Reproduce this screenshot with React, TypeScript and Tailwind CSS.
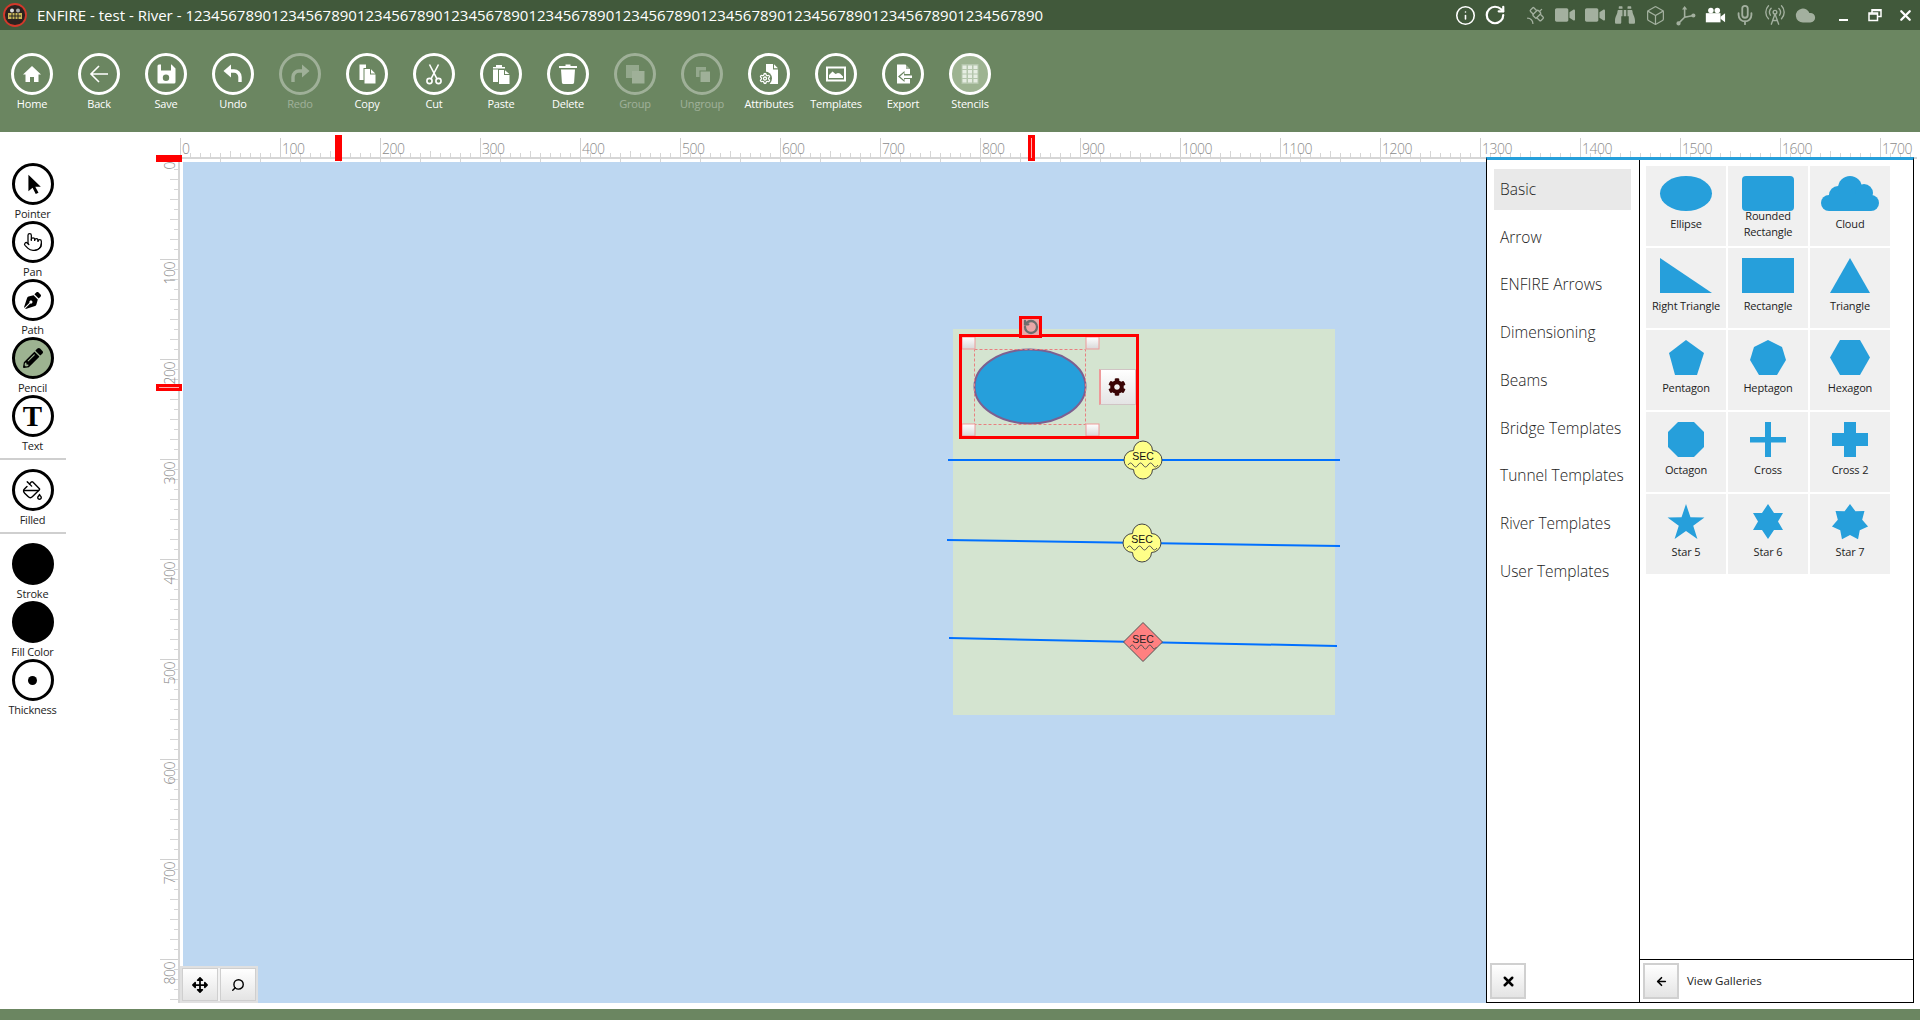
import { ReactNode } from "react";
import { Info, RotateCw, Satellite, Box, Mic, RadioTower, Cloud, Pointer, PaintBucket, Settings, Search, X, ArrowLeft } from "lucide-react";
import { FaVideo, FaBinoculars, FaPenNib, FaPencilAlt, FaCog, FaArrowsAlt } from "react-icons/fa";

const BLUE = "#269fdb";

const digits = "1234567890".repeat(10);

const range = (from: number, to: number, step: number) => {
  const out: number[] = [];
  for (let i = from; i <= to; i += step) out.push(i);
  return out;
};

const starPoints = (n: number, cx: number, cy: number, R: number, r: number) =>
  range(0, n * 2 - 1, 1)
    .map((i) => {
      const a = (Math.PI * i) / n - Math.PI / 2;
      const d = i % 2 === 0 ? R : r;
      return `${cx + d * Math.cos(a)},${cy + d * Math.sin(a)}`;
    })
    .join(" ");

const Ic = ({ children }: { children: ReactNode }) => (
  <svg viewBox="0 0 24 24" width="24" height="24" fill="currentColor">
    {children}
  </svg>
);

const toolbar: { label: string; off?: boolean; active?: boolean; icon: ReactNode }[] = [
  { label: "Home", icon: <Ic><path d="M12 4 L21 12.5 H18.5 V20 H14 V15 H10 V20 H5.5 V12.5 H3 Z" /></Ic> },
  { label: "Back", icon: <Ic><path d="M21 12 H4.5 M12 4 L4 12 L12 20" fill="none" stroke="currentColor" strokeWidth="1.6" /></Ic> },
  { label: "Save", icon: <Ic><path fillRule="evenodd" d="M5 2.5h12.5l4 4V20a1.5 1.5 0 01-1.5 1.5H5A1.5 1.5 0 013.5 20V4A1.5 1.5 0 015 2.5zM7 2.5v6h10v-6zM12 12.5a3.2 3.2 0 100 6.4 3.2 3.2 0 000-6.4z" /></Ic> },
  { label: "Undo", icon: <Ic><path d="M6 9 H13 a6 6 0 0 1 6 6 v5" fill="none" stroke="currentColor" strokeWidth="3.4" /><path d="M10 2.5 L2.5 9 L10 15.5 Z" /></Ic> },
  { label: "Redo", off: true, icon: <Ic><g transform="matrix(-1 0 0 1 24 0)"><path d="M6 9 H13 a6 6 0 0 1 6 6 v5" fill="none" stroke="currentColor" strokeWidth="3.4" /><path d="M10 2.5 L2.5 9 L10 15.5 Z" /></g></Ic> },
  { label: "Copy", icon: <Ic><path d="M4.5 2.5h6.5v3.5H8.5v12h-4z" /><path d="M9.5 7h5.5v5.5h5.5v9h-11zM16 7.2l4.3 4.3H16z" /></Ic> },
  { label: "Cut", icon: <Ic><g fill="none" stroke="currentColor" strokeWidth="1.6"><circle cx="7.5" cy="19" r="2.6" /><circle cx="16.5" cy="19" r="2.6" /><path d="M9 16.8 L16.5 2.5 M15 16.8 L7.5 2.5" /></g></Ic> },
  { label: "Paste", icon: <Ic><path d="M4 5h3V3h6v2h3v1.5H4zM4 7.5h5V20H4z" /><path d="M10 8h5v5h5.5v9H10zM16 8.2l4.3 3.8H16z" /></Ic> },
  { label: "Delete", icon: <Ic><path d="M9.5 2.5h5V4H21v2H3V4h6.5z" /><path d="M5 7.5h14l-.9 13a1.8 1.8 0 01-1.8 1.5H7.7a1.8 1.8 0 01-1.8-1.5z" /></Ic> },
  { label: "Group", off: true, icon: <Ic><path d="M3 3h13v13H3z" opacity=".8" /><path d="M9 9h12.5v12.5H9z" /></Ic> },
  { label: "Ungroup", off: true, icon: <Ic><path d="M6 5h10v3.5H9.5V15H6z" opacity=".8" /><path d="M10.5 9.5H20V20h-9.5z" /></Ic> },
  { label: "Attributes", icon: <Ic><path d="M9 2h7v5.5h5V22H9z" /><path d="M17 2.2l4 4h-4z" /><circle cx="8" cy="16.5" r="7" fill="#6b8661" /><Settings x={2} y={10.5} width={12} height={12} strokeWidth={2.6} fill="none" /></Ic> },
  { label: "Templates", icon: <Ic><path fillRule="evenodd" d="M2 4.5h20v15H2zM4 6.5v11h16v-11z" /><path d="M5 16v-3l3.5-3.5 3 2.5 2.5-1 2 .5 3 3v1.5z" /></Ic> },
  { label: "Export", icon: <Ic><path d="M6 2.5h8.5L19 7v14.5H6z" /><path d="M15 2.5l4.5 4.5H15z" fill="#6b8661" opacity=".6" /><path d="M7 14.5l6.5-5.5v3h10v5h-10v3z" fill="#6b8661" /><path d="M9 14.5l4-3.5v2.5h8V16h-8v2z" /></Ic> },
  { label: "Stencils", active: true, icon: <svg viewBox="0 0 24 24" width="24" height="24"><rect x="3.5" y="2" width="17" height="20" fill="#b5c6ad" /><g fill="#e6ede2">{[4.5, 10, 15.5].map((x) => [3.5, 8, 12.5, 17].map((y) => <rect key={`${x}-${y}`} x={x} y={y} width="4" height="3.5" />))}</g></svg> },
];

const tools: { label: string; active?: boolean; solid?: boolean; divider?: boolean; icon?: ReactNode }[] = [
  { label: "Pointer", icon: <svg viewBox="0 0 24 24" width="22" height="22"><path d="M7 2 L7 20 L11.5 16 L15 23 L18 21.5 L14.5 15 L20.5 15 Z" /></svg> },
  { label: "Pan", icon: <Pointer size={20} strokeWidth={1.5} /> },
  { label: "Path", icon: <FaPenNib size={17} /> },
  { label: "Pencil", active: true, icon: <FaPencilAlt size={20} /> },
  { label: "Text", divider: true, icon: <span className="font-['Liberation_Serif',serif] font-bold text-[29px] leading-none">T</span> },
  { label: "Filled", divider: true, icon: <PaintBucket size={21} strokeWidth={1.6} /> },
  { label: "Stroke", solid: true },
  { label: "Fill Color", solid: true },
  { label: "Thickness", icon: <span className="w-[9px] h-[9px] rounded-full bg-black" /> },
];

const menu = ["Basic", "Arrow", "ENFIRE Arrows", "Dimensioning", "Beams", "Bridge Templates", "Tunnel Templates", "River Templates", "User Templates"];

const shapes: { label: string; tall?: boolean; shape: ReactNode }[] = [
  { label: "Ellipse", shape: <ellipse cx="40" cy="27.5" rx="26" ry="17.5" /> },
  { label: "Rounded Rectangle", tall: true, shape: <rect x="14" y="10" width="52" height="35" rx="4" /> },
  { label: "Cloud", shape: <g><circle cx="19" cy="37" r="8" /><circle cx="28" cy="29" r="9" /><circle cx="40" cy="22" r="12" /><circle cx="54" cy="27" r="9" /><circle cx="61" cy="37" r="8" /><rect x="19" y="28" width="42" height="17" /></g> },
  { label: "Right Triangle", shape: <polygon points="14,10 66,45 14,45" /> },
  { label: "Rectangle", shape: <rect x="14" y="10" width="52" height="35" /> },
  { label: "Triangle", shape: <polygon points="40,10 60,45 20,45" /> },
  { label: "Pentagon", shape: <polygon points="40,10 58,23 51,45 29,45 23,23" /> },
  { label: "Heptagon", shape: <polygon points="40,10 54,17 58,30 49,45 31,45 22,30 26,17" /> },
  { label: "Hexagon", shape: <polygon points="30,10 50,10 60,27.5 50,45 30,45 20,27.5" /> },
  { label: "Octagon", shape: <polygon points="32,10 48,10 58,20 58,35 48,45 32,45 22,35 22,20" /> },
  { label: "Cross", shape: <path d="M37 10h6v15h15v5.5H43V45h-6V30.5H22V25h15z" /> },
  { label: "Cross 2", shape: <path d="M34 10h12v11h12v13H46v11H34V34H22V21h12z" /> },
  { label: "Star 5", shape: <polygon points={starPoints(5, 40, 29.4, 19.4, 7.6)} /> },
  { label: "Star 6", shape: <polygon points="40,10 46,19 55,19 50,27.5 55,36 46,36 40,45 34,36 25,36 30,27.5 25,19 34,19" /> },
  { label: "Star 7", shape: <polygon points={starPoints(7, 40, 28.5, 18.5, 12.5)} /> },
];

const SecCloud = ({ x, y }: { x: number; y: number }) => (
  <g transform={`translate(${x} ${y})`}>
    <path d="M9.5 9.5 A9.5 9.5 0 0 1 28.5 9.5 A9.5 9.5 0 0 1 28.5 28.5 A9.5 9.5 0 0 1 9.5 28.5 A9.5 9.5 0 0 1 9.5 9.5 Z" fill="#ffff88" stroke="#444" strokeWidth="1" />
    <text x="19" y="19" textAnchor="middle" fontSize="10.5" fill="#111" className="font-['Liberation_Sans',sans-serif]">SEC</text>
    <path d="M4 24 q2.5 -4 5 0 t5 0 t5 0 t5 0 t5 0 t5 0" fill="none" stroke="#555" strokeWidth="1" />
  </g>
);

const GrayButton = ({ children, className }: { children: ReactNode; className?: string }) => (
  <div className={`w-9 h-9 flex items-center justify-center border-2 border-[#d0d0d0] bg-linear-to-b from-white to-[#e4e4e4] text-black ${className ?? ""}`}>
    {children}
  </div>
);

const handles = [
  [962, 337],
  [1086, 337],
  [962, 424],
  [1086, 424],
];

export default function App() {
  return (
    <div className="w-[1920px] h-[1020px] overflow-hidden flex flex-col bg-white font-['Open_Sans',sans-serif]">
      {/* title bar */}
      <header className="h-[30px] shrink-0 flex items-center bg-[#41593b] text-white">
        <svg viewBox="0 0 24 24" width="24" height="24" className="ml-[3px] shrink-0">
          <circle cx="12" cy="12" r="11" fill="#2b2320" stroke="#d3392b" strokeWidth="1.8" />
          <rect x="5" y="10" width="14" height="6" fill="#c9b458" />
          <circle cx="9" cy="7.5" r="2" fill="#ddd" />
          <circle cx="15" cy="7.5" r="2" fill="#aaa" />
          <path d="M6 13h12M9 10v6M12 10v6M15 10v6" stroke="#222" strokeWidth="1" />
        </svg>
        <span className="ml-[10px] text-[15px] whitespace-nowrap">ENFIRE - test - River - {digits}</span>
        <div className="ml-auto flex items-center">
          <span className="w-[30px] flex justify-center"><Info size={21} strokeWidth={1.8} /></span>
          <span className="w-[30px] flex justify-center mr-[10px]"><RotateCw size={22} strokeWidth={2.4} /></span>
          <div className="flex items-center text-[#a3b09f]">
            <span className="w-[30px] flex justify-center"><Satellite size={21} strokeWidth={1.5} /></span>
            <span className="w-[30px] flex justify-center"><FaVideo size={20} /></span>
            <span className="w-[30px] flex justify-center"><FaVideo size={20} /></span>
            <span className="w-[30px] flex justify-center"><FaBinoculars size={20} /></span>
            <span className="w-[30px] flex justify-center"><Box size={21} strokeWidth={1.4} /></span>
            <span className="w-[30px] flex justify-center">
              <svg viewBox="0 0 24 24" width="21" height="21" fill="currentColor" stroke="currentColor" strokeWidth="1.8">
                <path d="M11 3v11L4 21M11 14l10-2" fill="none" />
                <path d="M11 1l-3 4h6z" stroke="none" />
                <circle cx="4" cy="21" r="1.5" />
                <circle cx="21" cy="12" r="1.5" />
              </svg>
            </span>
            <span className="w-[30px] flex justify-center text-white">
              <svg viewBox="0 0 24 24" width="22" height="22" fill="currentColor">
                <circle cx="7.5" cy="7" r="3" />
                <circle cx="14.5" cy="7" r="3" />
                <rect x="2" y="10" width="16" height="10" />
                <path d="M18 14l5-4v10l-5-4z" />
              </svg>
            </span>
            <span className="w-[30px] flex justify-center"><Mic size={22} strokeWidth={2} /></span>
            <span className="w-[30px] flex justify-center"><RadioTower size={22} strokeWidth={1.5} /></span>
            <span className="w-[30px] flex justify-center"><Cloud size={21} fill="currentColor" /></span>
          </div>
          <span className="w-[31px] ml-[8px] flex justify-center pt-[9px]"><span className="w-[9px] h-[2px] bg-white" /></span>
          <span className="w-[31px] flex justify-center">
            <svg viewBox="0 0 14 14" width="14" height="14" fill="none" stroke="currentColor" strokeWidth="1.5">
              <rect x="1" y="5" width="8.5" height="7.5" />
              <path d="M4 5V1.8h9v6.7H9.5" />
              <path d="M1 6h8.5M4 2.5h9" />
            </svg>
          </span>
          <span className="w-[30px] flex justify-center"><X size={17} strokeWidth={3.2} /></span>
        </div>
      </header>

      {/* toolbar */}
      <nav className="h-[102px] shrink-0 bg-[#6b8661] flex pt-[23px]">
        <div className="flex ml-[-1.5px]">
          {toolbar.map((t) => (
            <div key={t.label} className={`w-[67px] flex flex-col items-center text-white ${t.off ? "opacity-35" : ""}`}>
              <div className={`w-[42px] h-[42px] rounded-full border-[3px] border-white flex items-center justify-center ${t.active ? "bg-[#9db391]" : ""}`}>
                {t.icon}
              </div>
              <span className="mt-px text-[11px] leading-4 tracking-[-0.2px] whitespace-nowrap">{t.label}</span>
            </div>
          ))}
        </div>
      </nav>

      {/* work area */}
      <main className="relative flex-1 flex">
        <aside className="w-[66px] shrink-0 pt-[31px] mr-[90px]">
          {tools.map((t) => (
            <div key={t.label}>
              <div className="w-[65px] h-[58px] flex flex-col items-center text-black">
                <div className={`w-[42px] h-[42px] shrink-0 rounded-full border-[3px] border-black flex items-center justify-center ${t.active ? "bg-[#9db391]" : ""} ${t.solid ? "bg-black" : ""}`}>
                  {t.icon}
                </div>
                <span className="mt-px text-[11px] leading-4 tracking-[-0.2px] text-[#222] whitespace-nowrap">{t.label}</span>
              </div>
              {t.divider && <div className="h-[2px] bg-[#cfcfcf] mt-[5px] mb-[9px]" />}
            </div>
          ))}
        </aside>

        <div className="flex flex-col flex-1 min-w-0">
          {/* horizontal ruler */}
          <svg width="1764" height="30" viewBox="156 132 1764 30" className="shrink-0">
            <rect x="180" y="157" width="1737" height="2" fill="#d6d6d6" />
            {range(0, 1730, 10).map((v) => (
              <rect key={v} x={180 + v} y={v % 50 === 0 ? 151 : 153} width="1" height={v % 50 === 0 ? 6 : 4} fill="#d6d6d6" />
            ))}
            {range(40, 1300, 40).map((v) => (
              <rect key={v} x={180 + v} y="159" width="1" height="3" fill="#d6d6d6" />
            ))}
            {range(0, 1700, 100).map((v) => (
              <g key={v}>
                <rect x={180 + v} y="138" width="1" height="19" fill="#d0d0d0" />
                <text x={182 + v} y="154" fontSize="14" fill="#8c8c8c" letterSpacing="-0.5" className="font-light">{v}</text>
              </g>
            ))}
          </svg>

          <div className="flex flex-1 min-h-0">
            {/* vertical ruler */}
            <svg width="27" height="841" viewBox="156 162 27 841" className="shrink-0">
              <rect x="178" y="162" width="2" height="841" fill="#d6d6d6" />
              {range(10, 840, 10).map((v) => (
                <rect key={v} x={v % 20 === 0 ? 170 : 174} y={159 + v} width={v % 20 === 0 ? 8 : 4} height="1" fill="#d6d6d6" />
              ))}
              {range(0, 800, 100).map((v) => (
                <g key={v}>
                  {v > 0 && <rect x="160" y={159 + v} width="18" height="1" fill="#d0d0d0" />}
                  <text transform={`translate(175 ${162 + v}) rotate(-90)`} textAnchor="end" fontSize="14" fill="#8c8c8c" letterSpacing="-0.5" className="font-light">{v}</text>
                </g>
              ))}
            </svg>

            {/* canvas */}
            <div className="relative w-[1303px] h-[841px] bg-[#bdd7f1]">
              <svg width="1303" height="841" viewBox="183 162 1303 841" className="absolute inset-0">
                <defs>
                  <linearGradient id="handle" x1="0" y1="0" x2="0" y2="1">
                    <stop offset="0" stopColor="#ffffff" />
                    <stop offset="1" stopColor="#d8d8d8" />
                  </linearGradient>
                </defs>
                <rect x="953" y="329" width="382" height="386" fill="#d4e4d0" />
                <path d="M948 460 H1340" stroke="#0070ff" strokeWidth="2" />
                <path d="M947 540 L1340 546" stroke="#0070ff" strokeWidth="2" />
                <path d="M949 638 L1337 646" stroke="#0070ff" strokeWidth="2" />
                <SecCloud x={1124} y={441} />
                <SecCloud x={1123} y={524} />
                <g transform="translate(1143 642)">
                  <polygon points="0,-19.5 19.5,0 0,19.5 -19.5,0" fill="#ff8080" stroke="#555" strokeWidth="1" />
                  <text y="1" textAnchor="middle" fontSize="10.5" fill="#222" className="font-['Liberation_Sans',sans-serif]">SEC</text>
                  <path d="M-13 5 q2.2 -4 4.4 0 t4.4 0 t4.4 0 t4.4 0 t4.4 0 t4.4 0" fill="none" stroke="#555" strokeWidth="1" />
                </g>
                <ellipse cx="1030" cy="386.5" rx="55.5" ry="37" fill={BLUE} stroke="#7d6090" strokeWidth="2" />
                <rect x="974.5" y="349.5" width="111" height="75" fill="none" stroke="#e88080" strokeWidth="1" strokeDasharray="3 2" />
                {handles.map(([x, y]) => (
                  <rect key={`${x}-${y}`} x={x} y={y} width="13" height="12" fill="url(#handle)" stroke="#ee9a9a" strokeWidth="1" />
                ))}
                <rect x="960.5" y="335.5" width="177" height="102" fill="none" stroke="#ff0000" strokeWidth="3" />
              </svg>
              <div className="absolute left-[836px] top-[154px] w-[23px] h-[22px] border-[3px] border-[#ff0000] bg-[#e9a7a7] flex items-center justify-center text-[#6d6d6d]">
                <RotateCw size={16} strokeWidth={3.4} className="-scale-x-100" />
              </div>
              <div className="absolute left-[916px] top-[207px] w-[37px] h-9 flex items-center justify-center border border-[#d0c4c4] border-l-2 border-l-[#ee9a9a] bg-linear-to-b from-white to-[#e4e4e4] text-[#3a0505]">
                <FaCog size={18} className="-ml-[2px]" />
              </div>
              <div className="absolute left-[-3px] bottom-0 w-[78px] h-[37px] bg-[#f2f2f2] border-2 border-[#e0e0e0] flex gap-[2px] text-black">
                <div className="w-9 h-full flex items-center justify-center border border-[#cfcfcf] bg-linear-to-b from-white to-[#e4e4e4]"><FaArrowsAlt size={16} /></div>
                <div className="w-9 h-full flex items-center justify-center border border-[#cfcfcf] bg-linear-to-b from-white to-[#e4e4e4]"><Search size={14} strokeWidth={2.4} className="-scale-x-100" /></div>
              </div>
            </div>
          </div>
        </div>

        {/* ruler markers */}
        <div className="absolute left-[156px] top-[23px] w-[26px] h-[7px] bg-[#ff0000]" />
        <div className="absolute left-[156px] top-[252px] w-[26px] h-[7px] bg-[#ff0000] flex items-center justify-center"><span className="w-[20px] h-px bg-[#ffb0b0]" /></div>
        <div className="absolute left-[335px] top-[3px] w-[7px] h-[26px] bg-[#ff0000]" />
        <div className="absolute left-[1028px] top-[3px] w-[7px] h-[26px] bg-[#ff0000] flex justify-center items-center"><span className="w-px h-[20px] bg-[#ffb0b0]" /></div>

        {/* stencil panel */}
        <section className="absolute left-[1486px] top-[25px] w-[428px] h-[846px] bg-white border border-black border-t-[3px] border-t-[#269fdb] flex text-[#222]">
          <div className="w-[153px] shrink-0 border-r border-black flex flex-col pt-[9px] pl-[7px] pr-[8px] relative">
            {menu.map((m, i) => (
              <div key={m} className={`h-[41px] mb-[6.75px] shrink-0 flex items-center pl-[6px] text-[15.5px] font-light text-[#222] whitespace-nowrap ${i === 0 ? "bg-[#e9e9e9]" : ""}`}>
                {m}
              </div>
            ))}
            <GrayButton className="absolute left-[3px] bottom-[3px]"><X size={15} strokeWidth={4} /></GrayButton>
          </div>
          <div className="flex-1 flex flex-col">
            <div className="flex-1 pt-[6px] pl-[6px]">
              <div className="grid grid-cols-[80px_80px_80px] auto-rows-[80px] gap-[2px]">
                {shapes.map((s) => (
                  <div key={s.label} className="relative bg-[#f0f0f0]">
                    <svg viewBox="0 0 80 46" width="80" height="46" fill={BLUE} className="block">{s.shape}</svg>
                    <div className={`absolute inset-x-0 text-center text-[11px] leading-4 tracking-[-0.15px] ${s.tall ? "top-[42px]" : "top-[50px]"}`}>
                      {s.label}
                    </div>
                  </div>
                ))}
              </div>
            </div>
            <div className="h-[43px] shrink-0 border-t border-black flex items-center pl-[3px]">
              <GrayButton><ArrowLeft size={13} strokeWidth={3} /></GrayButton>
              <span className="ml-[8px] text-[11.5px]">View Galleries</span>
            </div>
          </div>
        </section>
      </main>

      <footer className="h-[11px] shrink-0 bg-[#6b8661]" />
    </div>
  );
}
